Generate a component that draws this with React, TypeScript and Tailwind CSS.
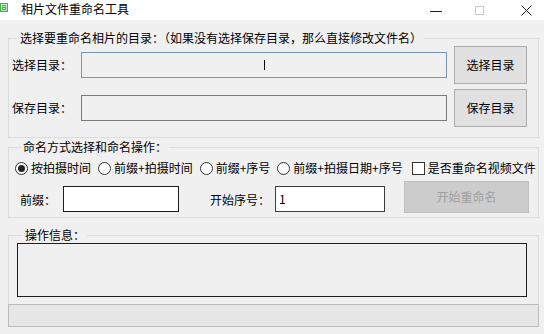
import React from "react";

const font = { fontFamily: '"Noto Sans CJK SC", "Microsoft YaHei", sans-serif' };

function Radio({ label, checked }: { label: string; checked?: boolean }) {
  return (
    <div className="flex items-center shrink-0 whitespace-nowrap">
      <div className="w-[13px] h-[13px] rounded-full border border-[#333] bg-white flex items-center justify-center">
        {checked && <div className="w-[7px] h-[7px] rounded-full bg-[#222]" />}
      </div>
      <span className="ml-[3px]">{label}</span>
    </div>
  );
}

function TitleBar() {
  return (
    <div className="h-[20px] bg-white flex items-start">
      <svg width="8" height="9" viewBox="0 0 8 9" className="mt-[3px] ml-[0px]">
        <rect width="8" height="9" fill="#3cb44a" />
        <path d="M1 1.5h6M1.5 1.5v6M6.5 1.5v6M1.5 7.5h5M2.5 3.5h3M3 5.5h2" stroke="#e9f7e4" strokeWidth="0.8" fill="none" />
      </svg>
      <span className="ml-[13px] mt-[1px] text-[12px] leading-[16px] text-black">相片文件重命名工具</span>
      <div className="ml-auto flex items-start">
        <div className="w-[12px] h-[1px] bg-[#222] mt-[11px] mr-[33px]" />
        <div className="w-[9px] h-[9px] border border-[#c8c8c8] mt-[6px] mr-[37px]" />
        <svg width="11" height="11" viewBox="0 0 11 11" className="mt-[5px] mr-[12px]">
          <path d="M0.5 0.5l10 10M10.5 0.5l-10 10" stroke="#222" strokeWidth="1" />
        </svg>
      </div>
    </div>
  );
}

export default function App() {
  return (
    <div className="w-[544px] h-[334px] bg-[#f0f0f0] text-[12px] text-black overflow-hidden" style={font}>
      <TitleBar />
      <div className="pl-[8px] pr-[5px] pt-[11px]">
        <fieldset className="border border-[#dcdcdc] pl-[3px] pt-[1px] pb-[10px] m-0">
          <legend className="ml-[6px] px-[2px] leading-[14px] whitespace-nowrap">
            选择要重命名相片的目录：（如果没有选择保存目录，那么直接修改文件名）
          </legend>
          <div className="flex items-center h-[38px]">
            <span className="w-[69px] whitespace-nowrap">选择目录：</span>
            <div className="w-[366px] h-[26px] border border-[#7896b4] bg-[#f0f0f0] flex items-center pl-[182px]">
              <div className="w-[1px] h-[10px] bg-black" />
            </div>
            <button className="ml-[7px] w-[73px] h-[38px] bg-[#e1e1e1] border border-[#adadad]">选择目录</button>
          </div>
          <div className="flex items-center h-[38px] mt-[5px]">
            <span className="w-[69px] whitespace-nowrap">保存目录：</span>
            <div className="w-[366px] h-[26px] border border-[#7a7a7a] bg-[#f0f0f0]" />
            <button className="ml-[7px] w-[73px] h-[38px] bg-[#e1e1e1] border border-[#adadad]">保存目录</button>
          </div>
        </fieldset>

        <fieldset className="mt-[2px] border border-[#dcdcdc] pl-[6px] pb-[4px] m-0">
          <legend className="ml-[6px] px-[2px] leading-[14px] whitespace-nowrap">命名方式选择和命名操作：</legend>
          <div className="flex items-center h-[16px] mt-[6px] gap-[7px] whitespace-nowrap">
            <Radio label="按拍摄时间" checked />
            <Radio label="前缀+拍摄时间" />
            <Radio label="前缀+序号" />
            <Radio label="前缀+拍摄日期+序号" />
            <div className="flex items-center shrink-0 ml-[2px]">
              <div className="w-[13px] h-[13px] border border-[#333] bg-white" />
              <span className="ml-[3px]">是否重命名视频文件</span>
            </div>
          </div>
          <div className="flex items-start h-[32px] mt-[5px] whitespace-nowrap">
            <span className="w-[48px] pl-[5px] mt-[10px]">前缀：</span>
            <div className="w-[116px] h-[26px] mt-[5px] border border-[#1e1e1e] bg-white" />
            <span className="ml-[31px] w-[65px] mt-[10px]">开始序号：</span>
            <div className="w-[110px] h-[26px] mt-[5px] border border-[#3c3c3c] bg-white pl-[3px] leading-[24px]">1</div>
            <button disabled className="ml-[19px] w-[125px] h-[32px] bg-[#cccccc] border border-[#bfbfbf] text-[#a0a0a0]">
              开始重命名
            </button>
          </div>
        </fieldset>

        <fieldset className="mt-[10px] border border-b-0 border-[#dcdcdc] pl-[8px] pb-[7px] m-0">
          <legend className="ml-[6px] px-[2px] leading-[14px]">操作信息：</legend>
          <div className="mt-[1px] w-[510px] h-[54px] border border-[#1e1e1e] bg-[#f0f0f0]" />
        </fieldset>
        <div className="h-[23px] border border-[#bcbcbc] bg-[#e6e6e6]" />
      </div>
    </div>
  );
}
